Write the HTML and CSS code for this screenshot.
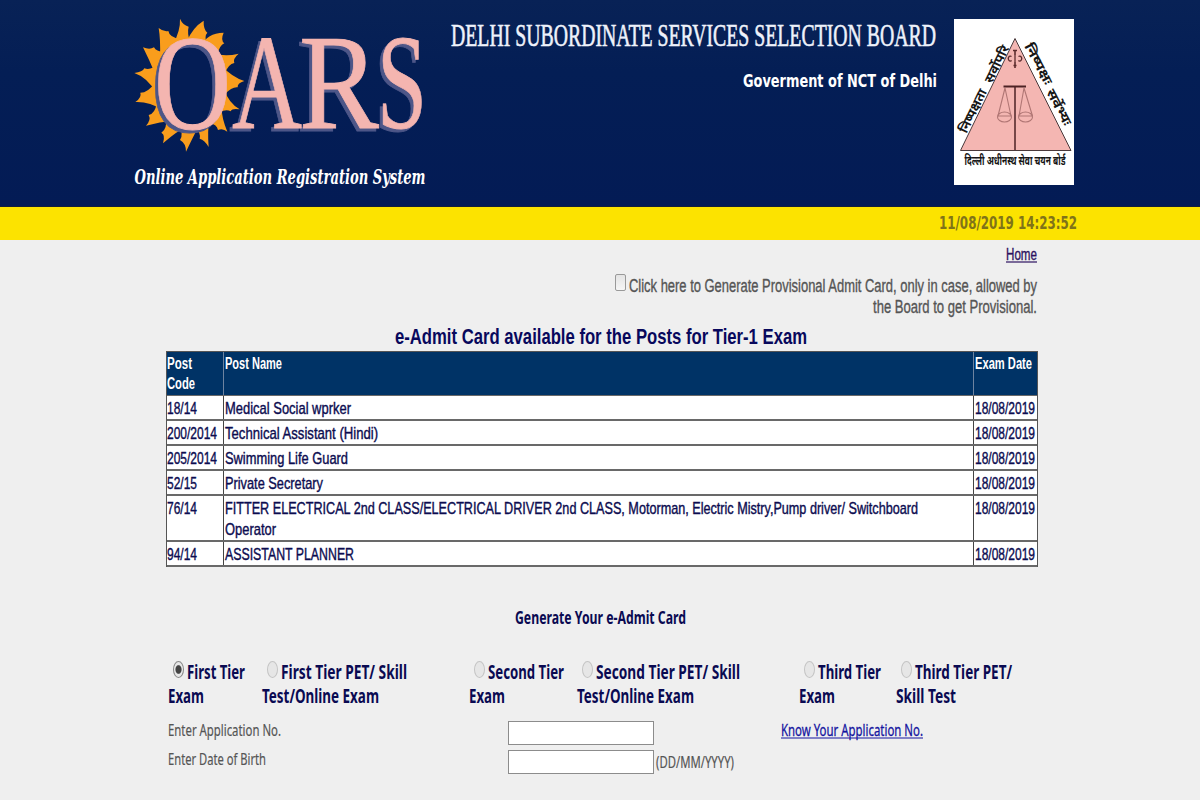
FILE: index.html
```html
<!DOCTYPE html>
<html lang="en">
<head>
<meta charset="utf-8">
<title>OARS - Online Application Registration System</title>
<link rel="stylesheet" href="styles.css">
</head>
<body>
<header class="banner">
  <svg class="logo" viewBox="0 0 330 207" role="img" aria-label="OARS">
    <g transform="scale(.33333)" class="sun">
      <path d="M158 135Q182 92 180 56Q188 75 206 80Q201 98 210 125Z"/>
      <path d="M200 125Q218 82 251 62Q250 88 262 98Q252 108 260 135Z"/>
      <path d="M246 135Q260 100 311 98Q301 120 313 130Q298 136 292 165Z"/>
      <path d="M280 158Q310 172 356 161Q338 176 343 189Q325 192 315 220Z"/>
      <path d="M308 200Q335 230 373 243Q352 249 353 262Q336 260 314 283Z"/>
      <path d="M314 270Q325 308 359 328Q336 324 332 334Q318 326 298 338Z"/>
      <path d="M304 318Q305 355 322 395Q308 383 294 390Q290 372 268 370Z"/>
      <path d="M268 355Q262 395 266 441Q254 420 239 416Q244 398 222 380Z"/>
      <path d="M238 375Q222 405 198 455Q198 430 180 420Q192 405 176 370Z"/>
      <path d="M204 378Q172 392 129 430Q137 404 124 398Q142 388 138 355Z"/>
      <path d="M160 362Q120 365 78 377Q94 360 86 345Q106 340 110 308Z"/>
      <path d="M128 330Q88 304 46 306Q66 292 61 278Q84 278 105 248Z"/>
      <path d="M110 280Q82 232 43 219Q68 216 73 205Q92 213 118 190Z"/>
      <path d="M107 225Q88 180 69 142Q89 150 102 142Q110 158 140 155Z"/>
      <path d="M120 172Q122 120 116 84Q130 96 145 93Q148 112 182 118Z"/>
      <ellipse cx="218" cy="250" rx="104" ry="138"/>
      <ellipse class="hole" cx="219" cy="251" rx="86" ry="128"/>
    </g>
    <g class="mark">
      <text x="34" y="128.500" textLength="77">O</text><text x="112" y="128" textLength="70">A</text><text x="179" y="128" textLength="80">R</text><text x="257" y="128" textLength="50">S</text>
    </g>
    <text class="tagline" x="14.500" y="184" textLength="291">Online Application Registration System</text>
  </svg>
  <div class="board">
    <svg class="line" width="487" height="28"><text class="title" x="1" y="23" textLength="485">DELHI SUBORDINATE SERVICES SELECTION BOARD</text></svg>
    <svg class="line gov" width="194" height="24"><text class="dv" x="0" y="18" textLength="194">Goverment of NCT of Delhi</text></svg>
  </div>
  <svg class="emblem" viewBox="0 0 120 166" role="img">
    <rect width="120" height="166" fill="#fff"/>
    <path d="M61 19.500L117 131.500H6.500Z" fill="#f4b6b2" stroke="#4a3a3c" stroke-width="1"/>
    <path d="M61 67.500V131" stroke="#4d2224" stroke-width="1.500"/>
    <path d="M49.500 67.500H72" stroke="#4d2224" stroke-width="2"/>
    <g fill="none" stroke="#b07674" stroke-width="1.100">
      <path d="M51 69L44 97M51 69L57 97M70 69L65 97M70 69L78.500 97"/>
      <ellipse cx="50.500" cy="98" rx="7" ry="5"/><ellipse cx="71.500" cy="98" rx="7" ry="5"/>
      <path d="M44 97H57M65 97H78"/>
    </g>
    <path d="M61 31V36M59 31.500H63M61 43V49M59.500 46.500H62.500" fill="none" stroke="#5c2c2d" stroke-width="1.600"/>
    <path d="M57.500 37.500a2 2.500 0 1 0 .1 4M61 36V43M64.500 37.500a2 2.500 0 1 1-.1 4" fill="none" stroke="#5c2c2d" stroke-width="1.300"/>
    <g class="hindi" lang="hi">
      <text transform="translate(12.500 115) rotate(-64)" textLength="47">निष्पक्षता</text>
      <text transform="translate(38 65) rotate(-64)" textLength="40">सर्वोपरि</text>
      <text transform="translate(70 27) rotate(62)" textLength="45">निष्पक्षः</text>
      <text transform="translate(92 73) rotate(62)" textLength="39">सर्वेभ्यः</text>
      <text x="10.500" y="146" textLength="101">दिल्ली अधीनस्थ सेवा चयन बोर्ड</text>
    </g>
  </svg>
</header>
<div class="clock"><svg class="line" width="139" height="24"><text class="dv" y="18" textLength="138">11/08/2019 14:23:52</text></svg></div>
<main>
  <nav class="home"><a href="#"><svg class="line" width="31" height="24"><text y="18.500" textLength="31">Home</text><path d="M0 21H31"/></svg></a></nav>
  <div class="prov">
    <input type="checkbox" class="check" aria-label="Provisional">
    <div class="provtext">
      <svg class="line" width="408" height="21"><text y="17.500" textLength="408">Click here to Generate Provisional Admit Card, only in case, allowed by</text></svg>
      <svg class="line" width="164" height="24"><text y="17.500" textLength="164">the Board to get Provisional.</text></svg>
    </div>
  </div>
  <h1><svg class="line" width="412" height="25"><text y="18" textLength="412">e-Admit Card available for the Posts for Tier-1 Exam</text></svg></h1>
  <div class="posts">
    <div class="row head">
      <div><svg class="line" width="50" height="42"><text y="17.500" textLength="25">Post</text><text y="37" textLength="28">Code</text></svg></div>
      <div><svg class="line" width="60" height="24"><text y="17.500" textLength="57">Post Name</text></svg></div>
      <div><svg class="line" width="60" height="24"><text y="17.500" textLength="57">Exam Date</text></svg></div>
    </div>
    <div class="row">
      <div><svg class="line" width="50" height="23"><text y="18" textLength="30">18/14</text></svg></div>
      <div><svg class="line" width="700" height="23"><text y="18" textLength="126">Medical Social wprker</text></svg></div>
      <div><svg class="line" width="61" height="23"><text y="18" textLength="60">18/08/2019</text></svg></div>
    </div>
    <div class="row">
      <div><svg class="line" width="50" height="23"><text y="18" textLength="50">200/2014</text></svg></div>
      <div><svg class="line" width="700" height="23"><text y="18" textLength="153">Technical Assistant (Hindi)</text></svg></div>
      <div><svg class="line" width="61" height="23"><text y="18" textLength="60">18/08/2019</text></svg></div>
    </div>
    <div class="row">
      <div><svg class="line" width="50" height="23"><text y="18" textLength="50">205/2014</text></svg></div>
      <div><svg class="line" width="700" height="23"><text y="18" textLength="123">Swimming Life Guard</text></svg></div>
      <div><svg class="line" width="61" height="23"><text y="18" textLength="60">18/08/2019</text></svg></div>
    </div>
    <div class="row">
      <div><svg class="line" width="50" height="23"><text y="18" textLength="30">52/15</text></svg></div>
      <div><svg class="line" width="700" height="23"><text y="18" textLength="98">Private Secretary</text></svg></div>
      <div><svg class="line" width="61" height="23"><text y="18" textLength="60">18/08/2019</text></svg></div>
    </div>
    <div class="row tall">
      <div><svg class="line" width="50" height="23"><text y="18" textLength="30">76/14</text></svg></div>
      <div><svg class="line" width="700" height="43"><text y="18" textLength="693">FITTER ELECTRICAL 2nd CLASS/ELECTRICAL DRIVER 2nd CLASS, Motorman, Electric Mistry,Pump driver/ Switchboard</text><text y="39" textLength="51">Operator</text></svg></div>
      <div><svg class="line" width="61" height="23"><text y="18" textLength="60">18/08/2019</text></svg></div>
    </div>
    <div class="row">
      <div><svg class="line" width="50" height="23"><text y="18" textLength="30">94/14</text></svg></div>
      <div><svg class="line" width="700" height="23"><text y="18" textLength="129">ASSISTANT PLANNER</text></svg></div>
      <div><svg class="line" width="61" height="23"><text y="18" textLength="60">18/08/2019</text></svg></div>
    </div>
  </div>
  <h2><svg class="line" width="171" height="24"><text y="18" textLength="171">Generate Your e-Admit Card</text></svg></h2>
  <div class="tiers">
    <label><span class="first"><input type="radio" name="tier" checked><svg class="line" width="58" height="24"><text y="18" textLength="58">First Tier</text></svg></span><svg class="line" width="36" height="24"><text y="18" textLength="36">Exam</text></svg></label>
    <label><span class="first"><input type="radio" name="tier"><svg class="line" width="126" height="24"><text y="18" textLength="126">First Tier PET/ Skill</text></svg></span><svg class="line" width="117" height="24"><text y="18" textLength="117">Test/Online Exam</text></svg></label>
    <label><span class="first"><input type="radio" name="tier"><svg class="line" width="76" height="24"><text y="18" textLength="76">Second Tier</text></svg></span><svg class="line" width="36" height="24"><text y="18" textLength="36">Exam</text></svg></label>
    <label><span class="first"><input type="radio" name="tier"><svg class="line" width="144" height="24"><text y="18" textLength="144">Second Tier PET/ Skill</text></svg></span><svg class="line" width="117" height="24"><text y="18" textLength="117">Test/Online Exam</text></svg></label>
    <label><span class="first"><input type="radio" name="tier"><svg class="line" width="63" height="24"><text y="18" textLength="63">Third Tier</text></svg></span><svg class="line" width="36" height="24"><text y="18" textLength="36">Exam</text></svg></label>
    <label><span class="first"><input type="radio" name="tier"><svg class="line" width="97" height="24"><text y="18" textLength="97">Third Tier PET/</text></svg></span><svg class="line" width="60" height="24"><text y="18" textLength="60">Skill Test</text></svg></label>
  </div>
  <form class="form">
    <svg class="line" width="114" height="24"><text y="15" textLength="113">Enter Application No.</text></svg>
    <input class="field" type="text" aria-label="Application number">
    <a href="#" class="know"><svg class="line" width="143" height="24"><text y="15" textLength="142">Know Your Application No.</text><path d="M0 17H142"/></svg></a>
    <svg class="line" width="99" height="24"><text y="15" textLength="98">Enter Date of Birth</text></svg>
    <input class="field" type="text" aria-label="Date of birth">
    <svg class="line hint" width="80" height="24"><text y="18" textLength="78">(DD/MM/YYYY)</text></svg>
  </form>
</main>
<script src="app.js"></script>
</body>
</html>
```
FILE: app.js
```js
// Condense each line's glyphs to its set length, not only the gaps between them.
document.querySelectorAll('text[textLength]').forEach(function (t) {
  t.setAttribute('lengthAdjust', 'spacingAndGlyphs');
});
```
FILE: styles.css
```css
* { box-sizing: border-box; }
body {
  margin: 0;
  height: 800px;
  overflow: hidden;
  background: #efefef;
  font-family: "Liberation Sans", Arial, sans-serif;
  font-size: 17px;
}
.line { display: block; overflow: visible; flex: none; }

/* Banner */
.banner {
  display: flex;
  height: 207px;
  padding-left: 120px;
  background: linear-gradient(#082256, #041e55 35%, #031b55);
  border-bottom: 1px solid #14203a;
}
.logo { width: 330px; height: 207px; flex: none; overflow: visible; }
.sun { fill: #f99d1c; }
.hole { fill: #041d55; }
.mark {
  font: 136px "Liberation Serif", serif;
  fill: #f4b5b0;
  stroke: #f4b5b0;
  stroke-width: .8px;
  filter: drop-shadow(-3px 3.5px 0 #4d5688);
}
.tagline { font: italic bold 21px "DejaVu Serif Condensed", "DejaVu Serif", serif; fill: #fff; }
.board {
  display: flex;
  flex-direction: column;
  align-items: flex-end;
  width: 487px;
  padding-top: 23px;
}
.title { font: 31px "Liberation Serif", serif; fill: #eef2fb; stroke: #eef2fb; stroke-width: .6px; }
.gov { margin-top: 18px; fill: #fff; }
.dv { font: bold 17px "DejaVu Sans", sans-serif; }
.emblem { width: 120px; height: 166px; margin: 19px 0 0 17px; }
.hindi { font: bold 13px "Noto Sans Devanagari", "Noto Sans", "FreeSans", sans-serif; fill: #151515; }

/* Date strip */
.clock {
  display: flex;
  justify-content: flex-end;
  height: 33px;
  padding: 4px 122px 0 0;
  background: #fce300;
  fill: #807319;
}

main { width: 872px; margin-left: 166px; }
.home { display: flex; justify-content: flex-end; padding: 1px 1px 0 0; fill: #2c1260; stroke: #2c1260; stroke-width: .35px; }
.home path, .know path { stroke-width: 1.2px; }
.prov { display: flex; justify-content: flex-end; height: 52px; margin-top: 9px; padding-right: 1px; fill: #555; stroke: #555; stroke-width: .35px; font-size: 17.500px; }
.check {
  appearance: none;
  width: 11px;
  height: 17px;
  margin: 0 3px 0 0;
  border: 1px solid #999;
  border-radius: 2px;
  background: linear-gradient(#e4e4e4, #f6f6f6);
}
.provtext { display: flex; flex-direction: column; align-items: flex-end; }
h1 { display: flex; justify-content: center; margin: 0; padding-right: 2px; font-size: 22px; fill: #08085c; }
h1 text { font-weight: bold; }

/* Posts table */
.posts { border: 1px solid #555; border-bottom-width: 0; font-size: 17px; fill: #0c0c50; stroke: #0c0c50; stroke-width: .4px; }
.row { display: grid; grid-template-columns: 56px 750px 1fr; height: 25px; background: #fff; border-bottom: 2px solid #696969; }
.row > div { padding-left: 1px; border-left: 1px solid #444; }
.row > div:first-child { border-left: 0; padding-left: 0; }
.row .line { transform: translateY(-.5px); }
.head { height: 44px; background: #003366; fill: #fff; stroke: none; font-weight: bold; font-size: 16px; border-bottom-width: 1px; }
.head > div { border-left-color: #6d83a0; }
.tall { height: 46px; }

h2 { display: flex; justify-content: center; margin: 39px 0 0; padding-right: 3px; font: bold 17px "Noto Sans", sans-serif; fill: #0a0a52; }

/* Tier choices */
.tiers {
  display: grid;
  grid-template-columns: 94px 207px 108px 222px 97px auto;
  margin: 31px 0 0 2px;
  font: bold 19px "Noto Sans", sans-serif;
  fill: #0a0a52;
}
.first { display: flex; padding-left: 5px; }
.tiers input {
  appearance: none;
  flex: none;
  width: 11px;
  height: 17px;
  margin: 0 3px 0 0;
  border: 1px solid #c4c4c4;
  border-radius: 50%;
  background: #e6e6e6;
}
.tiers input:checked { border-color: #888; background: radial-gradient(ellipse 3.5px 5px, #444 75%, #e8e8e8); }

/* Form */
.form {
  display: grid;
  grid-template-columns: 340px 146px auto;
  row-gap: 5px;
  margin: 12px 0 0 2px;
  font: 17px "Noto Sans", sans-serif;
  fill: #555;
  stroke: #555;
  stroke-width: .2px;
}
.field { width: 146px; height: 24px; border: 1px solid #8c8c8c; background: #fff; padding: 0 2px; }
.know { margin-left: 127px; fill: #1414a0; stroke: #1414a0; stroke-width: .3px; }
.hint { margin-left: 2px; }
```
